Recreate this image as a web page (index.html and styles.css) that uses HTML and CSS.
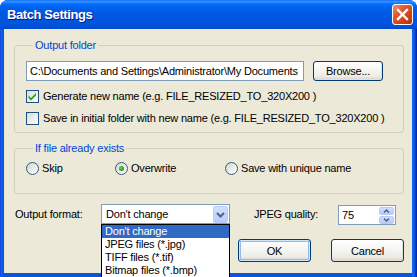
FILE: index.html
```html
<!DOCTYPE html>
<html lang="en">
<head>
    <meta charset="UTF-8">
    <title>Batch Settings</title>
    <link rel="stylesheet" href="styles.css">
</head>
<body>
    <div class="window">
        <!-- Title bar -->
        <div class="titlebar">
            <span class="title">Batch Settings</span>
            <button class="close" title="Close">
                <svg viewBox="0 0 21 21" width="21" height="21"><path d="M6 6 L15 15 M15 6 L6 15" stroke="#fff" stroke-width="2.4" stroke-linecap="square"/></svg>
            </button>
        </div>

        <div class="client">
            <fieldset class="group group-folder">
                <legend>Output folder</legend>
                <div class="path-row">
                    <div class="textbox path">C:\Documents and Settings\Administrator\My Documents</div>
                    <button class="btn browse">Browse...</button>
                </div>
                <label class="check-row">
                    <span class="checkbox">
                        <svg viewBox="0 0 11 11" width="11" height="11"><path d="M1.5 4.5 L4 7 L9 2 L9 4.5 L4 9.5 L1.5 7 Z" fill="#21a121"/></svg>
                    </span>
                    Generate new name (e.g. FILE_RESIZED_TO_320X200 )
                </label>
                <label class="check-row">
                    <span class="checkbox"></span>
                    Save in initial folder with new name (e.g. FILE_RESIZED_TO_320X200 )
                </label>
            </fieldset>

            <fieldset class="group group-exists">
                <legend>If file already exists</legend>
                <div class="radio-row">
                    <label class="radio-item skip"><span class="radio"></span>Skip</label>
                    <label class="radio-item overwrite"><span class="radio selected"></span>Overwrite</label>
                    <label class="radio-item unique"><span class="radio"></span>Save with unique name</label>
                </div>
            </fieldset>

            <div class="format-row">
                <span class="format-label">Output format:</span>
                <div class="combo">
                    <span class="combo-text">Don't change</span>
                    <span class="combo-btn">
                        <svg viewBox="0 0 15 17" width="15" height="17"><path d="M4 7 L7.5 10.5 L11 7" fill="none" stroke="#4d6185" stroke-width="2"/></svg>
                    </span>
                    <ul class="combo-list">
                        <li class="active">Don't change</li>
                        <li>JPEG files (*.jpg)</li>
                        <li>TIFF files (*.tif)</li>
                        <li>Bitmap files (*.bmp)</li>
                    </ul>
                </div>
                <span class="quality-label">JPEG quality:</span>
                <div class="spin">
                    <span class="spin-text">75</span>
                    <span class="spin-btns">
                        <span class="spin-btn"><svg viewBox="0 0 15 8" width="15" height="8"><path d="M5 5.5 L7.5 3 L10 5.5" fill="none" stroke="#4d6185" stroke-width="1.5"/></svg></span>
                        <span class="spin-btn"><svg viewBox="0 0 15 8" width="15" height="8"><path d="M5 2.5 L7.5 5 L10 2.5" fill="none" stroke="#4d6185" stroke-width="1.5"/></svg></span>
                    </span>
                </div>
            </div>

            <div class="button-row">
                <button class="btn default">OK</button>
                <button class="btn">Cancel</button>
            </div>
        </div>
    </div>
</body>
</html>
```

FILE: styles.css
```css
/* General */
body {
    margin: 0;
    overflow: hidden;
    font-family: 'Liberation Sans', Arial, sans-serif;
    font-size: 11px;
    letter-spacing: -0.2px;
    color: #000;
    background: #fff;
}

.window {
    width: 417px;
    height: 277px;
    box-sizing: border-box;
    display: flex;
    flex-direction: column;
    background: linear-gradient(90deg, #0831d9 0, #166aee 1px, #0855dd 3px, #0855dd 412px, #166aee 413px, #0a4ad8 415px, #001ea0 417px);
    border-radius: 8px 8px 0 0;
}

/* Title bar */
.titlebar {
    height: 29px;
    flex-shrink: 0;
    display: flex;
    align-items: center;
    justify-content: space-between;
    padding-left: 7px;
    border-radius: 8px 8px 0 0;
    background: linear-gradient(#0058ee 0, #3a93ff 1px, #288eff 2px, #127dff 3px, #0372ff 4px, #0066fa 5px, #0062f0 7px, #005ce7 10px, #0058e2 14px, #0055de 20px, #0053db 25px, #0050d5 27px, #0046c8 29px);
}

.title {
    color: #fff;
    font-family: 'Liberation Sans', Arial, sans-serif;
    font-weight: bold;
    font-size: 13px;
    letter-spacing: -0.4px;
    text-shadow: 1px 1px #0a1883;
}

.close {
    width: 21px;
    height: 21px;
    margin-right: 4px;
    padding: 0;
    border: 1px solid #fff;
    border-radius: 3px;
    background: linear-gradient(135deg, #e99478 0%, #de5a34 35%, #cf3f17 70%, #b8300c 100%);
    display: flex;
    align-items: center;
    justify-content: center;
}

.close svg {
    display: block;
    margin: -1px;
}

/* Client area */
.client {
    flex: 1;
    margin: 0 5px 4px 4px;
    background: #ece9d8;
    display: flex;
    flex-direction: column;
}

.group {
    margin: 0 8px 0 10px;
    padding: 0 0 7px 11px;
    border: 1px solid #d0d0bf;
    border-radius: 3px;
    min-width: 0;
}

.group legend {
    margin-left: 7px;
    padding: 0 2px;
    line-height: 12px;
    color: #0046d5;
}

.group-folder {
    margin-top: 10px;
}

.group-exists {
    margin-top: 9px;
    padding-bottom: 18px;
}

.path-row {
    display: flex;
    align-items: center;
    margin-top: 10px;
}

.textbox {
    box-sizing: border-box;
    height: 20px;
    line-height: 18px;
    padding-left: 3px;
    border: 1px solid #7f9db9;
    background: #fff;
    white-space: nowrap;
    overflow: hidden;
}

.path {
    width: 278px;
}

.btn {
    box-sizing: border-box;
    padding: 0;
    font-family: inherit;
    font-size: 11px;
    letter-spacing: inherit;
    color: #000;
    border: 1px solid #003c74;
    border-radius: 3px;
    background: linear-gradient(#ffffff 0%, #f4f4f0 50%, #ecebe6 80%, #d6d0c5 100%);
    box-shadow: inset -1px -1px 0 #e3e0d6;
}

.browse {
    width: 70px;
    height: 20px;
    margin-left: 9px;
}

.check-row {
    display: flex;
    align-items: center;
    height: 13px;
    line-height: 13px;
    margin-top: 9px;
    white-space: nowrap;
}

.checkbox {
    box-sizing: border-box;
    width: 13px;
    height: 13px;
    margin-right: 4px;
    flex-shrink: 0;
    border: 1px solid #1c5180;
    background: linear-gradient(135deg, #dcdcd7 0%, #f0f0ec 60%, #ffffff 100%);
}

.checkbox svg {
    display: block;
}

/* Radios */
.radio-row {
    display: flex;
    margin-top: 8px;
}

.radio-item {
    display: flex;
    align-items: center;
    height: 13px;
    line-height: 13px;
    white-space: nowrap;
}

.skip {
    width: 89px;
}

.overwrite {
    width: 110px;
}

.radio {
    box-sizing: border-box;
    width: 13px;
    height: 13px;
    margin-right: 3px;
    border: 1px solid #2f5b8a;
    border-radius: 50%;
    background: linear-gradient(135deg, #d4d4ce 0%, #f0f0ec 60%, #ffffff 100%);
    display: flex;
    align-items: center;
    justify-content: center;
}

.radio.selected::after {
    content: "";
    width: 5px;
    height: 5px;
    border-radius: 50%;
    background: radial-gradient(circle at 40% 40%, #6fd46f 0, #21a121 60%, #1a8c1a 100%);
}

/* Format row */
.format-row {
    display: flex;
    align-items: center;
    margin: 10px 0 0 11px;
    height: 20px;
}

.format-label {
    width: 86px;
}

.combo {
    position: relative;
    box-sizing: border-box;
    width: 129px;
    height: 20px;
    border: 1px solid #7f9db9;
    background: #fff;
    display: flex;
    align-items: center;
    justify-content: space-between;
}

.combo-text {
    padding-left: 4px;
}

.combo-btn {
    width: 15px;
    height: 17px;
    margin-right: 1px;
    box-sizing: border-box;
    border: 1px solid #b9ccf8;
    border-radius: 2px;
    background: linear-gradient(#d3e0fd, #b7cbf7);
}

.combo-btn svg {
    display: block;
    margin: -1px;
}

.combo-list {
    position: absolute;
    top: 19px;
    left: -1px;
    width: 129px;
    box-sizing: border-box;
    margin: 0;
    padding: 0;
    list-style: none;
    border: 1px solid #000;
    background: #fff;
    z-index: 2;
}

.combo-list li {
    height: 13px;
    line-height: 13px;
    padding-left: 3px;
    white-space: nowrap;
}

.combo-list li.active {
    background: #316ac5;
    color: #fff;
}

.quality-label {
    width: 84px;
    margin-left: 24px;
}

.spin {
    box-sizing: border-box;
    width: 58px;
    height: 20px;
    margin-top: 2px;
    border: 1px solid #7f9db9;
    background: #fff;
    display: flex;
    align-items: center;
    justify-content: space-between;
}

.spin-text {
    padding-left: 3px;
}

.spin-btns {
    display: flex;
    flex-direction: column;
    margin-right: 1px;
}

.spin-btn {
    width: 15px;
    height: 8px;
    margin: 0.5px 0;
    box-sizing: border-box;
    border: 1px solid #b9ccf8;
    border-radius: 2px;
    background: linear-gradient(#d3e0fd, #b7cbf7);
}

.spin-btn svg {
    display: block;
    margin: -1px;
}

/* Buttons */
.button-row {
    display: flex;
    justify-content: flex-end;
    gap: 20px;
    margin: 15px 8px 0 0;
}

.button-row .btn {
    width: 73px;
    height: 23px;
}

.btn.default {
    box-shadow: inset 0 0 0 1px #cee7ff, inset 0 0 0 2px #98b8ea;
}
```
